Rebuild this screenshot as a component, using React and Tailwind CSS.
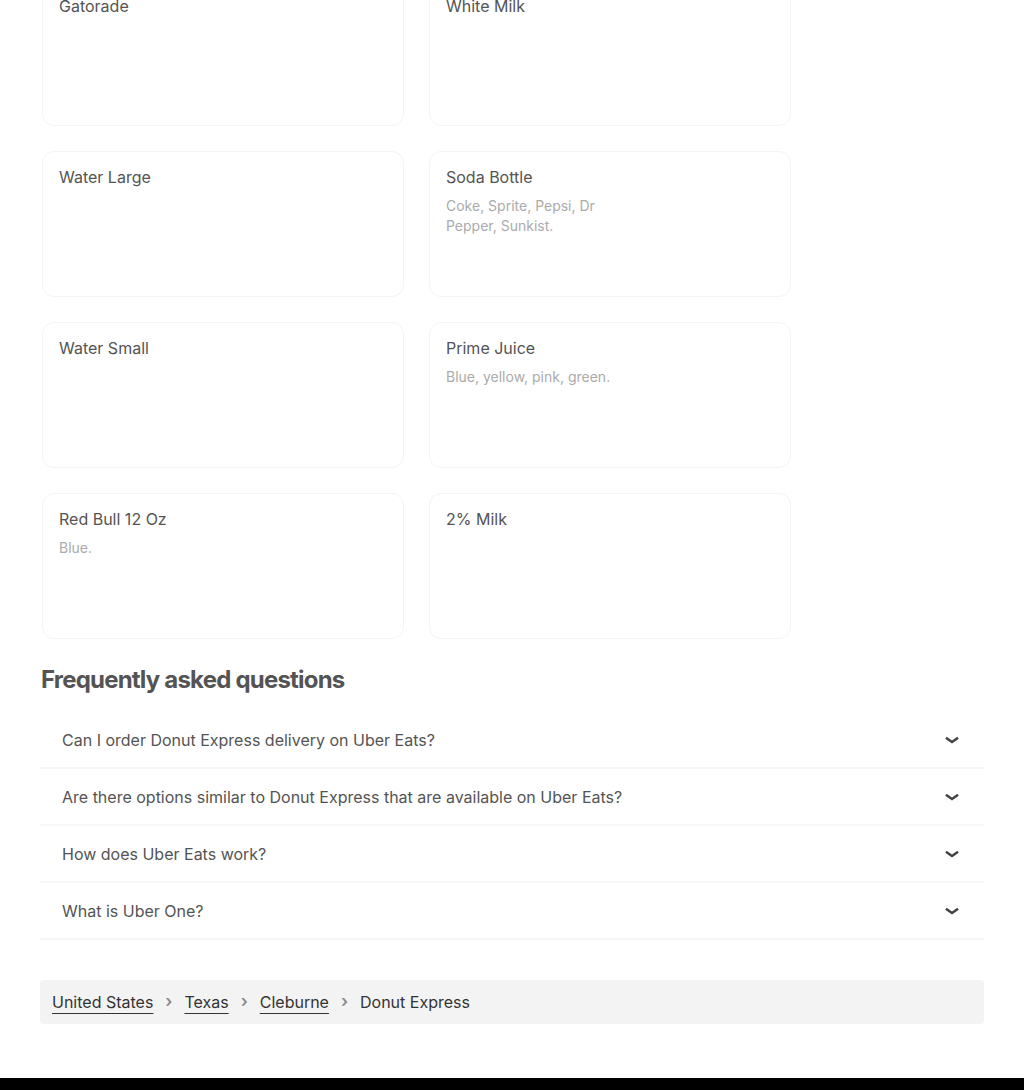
import React from "react";

const items = [
  { name: "Gatorade", desc: "" },
  { name: "White Milk", desc: "" },
  { name: "Water Large", desc: "" },
  { name: "Soda Bottle", desc: "Coke, Sprite, Pepsi, Dr Pepper, Sunkist." },
  { name: "Water Small", desc: "" },
  { name: "Prime Juice", desc: "Blue, yellow, pink, green." },
  { name: "Red Bull 12 Oz", desc: "Blue." },
  { name: "2% Milk", desc: "" },
];

const faqs = [
  "Can I order Donut Express delivery on Uber Eats?",
  "Are there options similar to Donut Express that are available on Uber Eats?",
  "How does Uber Eats work?",
  "What is Uber One?",
];

const crumbs = ["United States", "Texas", "Cleburne"];

const Chevron = () => (
  <svg width="14" height="10" viewBox="0 0 14 10" fill="none">
    <path d="M2 3.5l5 3.5 5-3.5" stroke="#444" strokeWidth="2.6" strokeLinecap="square" />
  </svg>
);

const ItemCard = ({ name, desc }) => (
  <div className="h-[146px] rounded-xl border border-[#f4f4f4] bg-white px-4 pt-[13px]">
    <div className="text-[16px] leading-6 text-[#545454]">{name}</div>
    {desc && (
      <div className="mt-[7px] max-w-[180px] text-[14px] leading-5 text-[#ababab]">{desc}</div>
    )}
  </div>
);

export default function App() {
  return (
    <div className="min-h-[1090px] bg-white font-['Inter',sans-serif] overflow-hidden">
      <div className="px-10">
        <div className="-mt-[20px] ml-[2px] grid grid-cols-[362px_362px] gap-x-[25px] gap-y-[25px]">
          {items.map((it) => (
            <ItemCard key={it.name} {...it} />
          ))}
        </div>

        <h2 className="mt-[25px] ml-[1px] text-[24px] font-bold leading-8 tracking-[-0.8px] text-[#545454]">
          Frequently asked questions
        </h2>

        <div className="mt-[16px]">
          {faqs.map((q) => (
            <div
              key={q}
              className="flex h-[57px] items-center justify-between border-b-2 border-[#f6f6f6] pl-[22px] pr-[25px]"
            >
              <span className="text-[16px] text-[#545454]">{q}</span>
              <Chevron />
            </div>
          ))}
        </div>

        <nav className="mt-[40px] flex h-[44px] items-center rounded-sm bg-[#f3f3f3] px-3 text-[16px] text-[#333]">
          {crumbs.map((c) => (
            <React.Fragment key={c}>
              <span className="underline decoration-[1px] underline-offset-[5px]">{c}</span>
              <span className="mx-[12px] text-[17px] font-semibold text-[#888]">›</span>
            </React.Fragment>
          ))}
          <span>Donut Express</span>
        </nav>
      </div>

      <div className="mt-[54px] h-[20px] bg-black" />
    </div>
  );
}
